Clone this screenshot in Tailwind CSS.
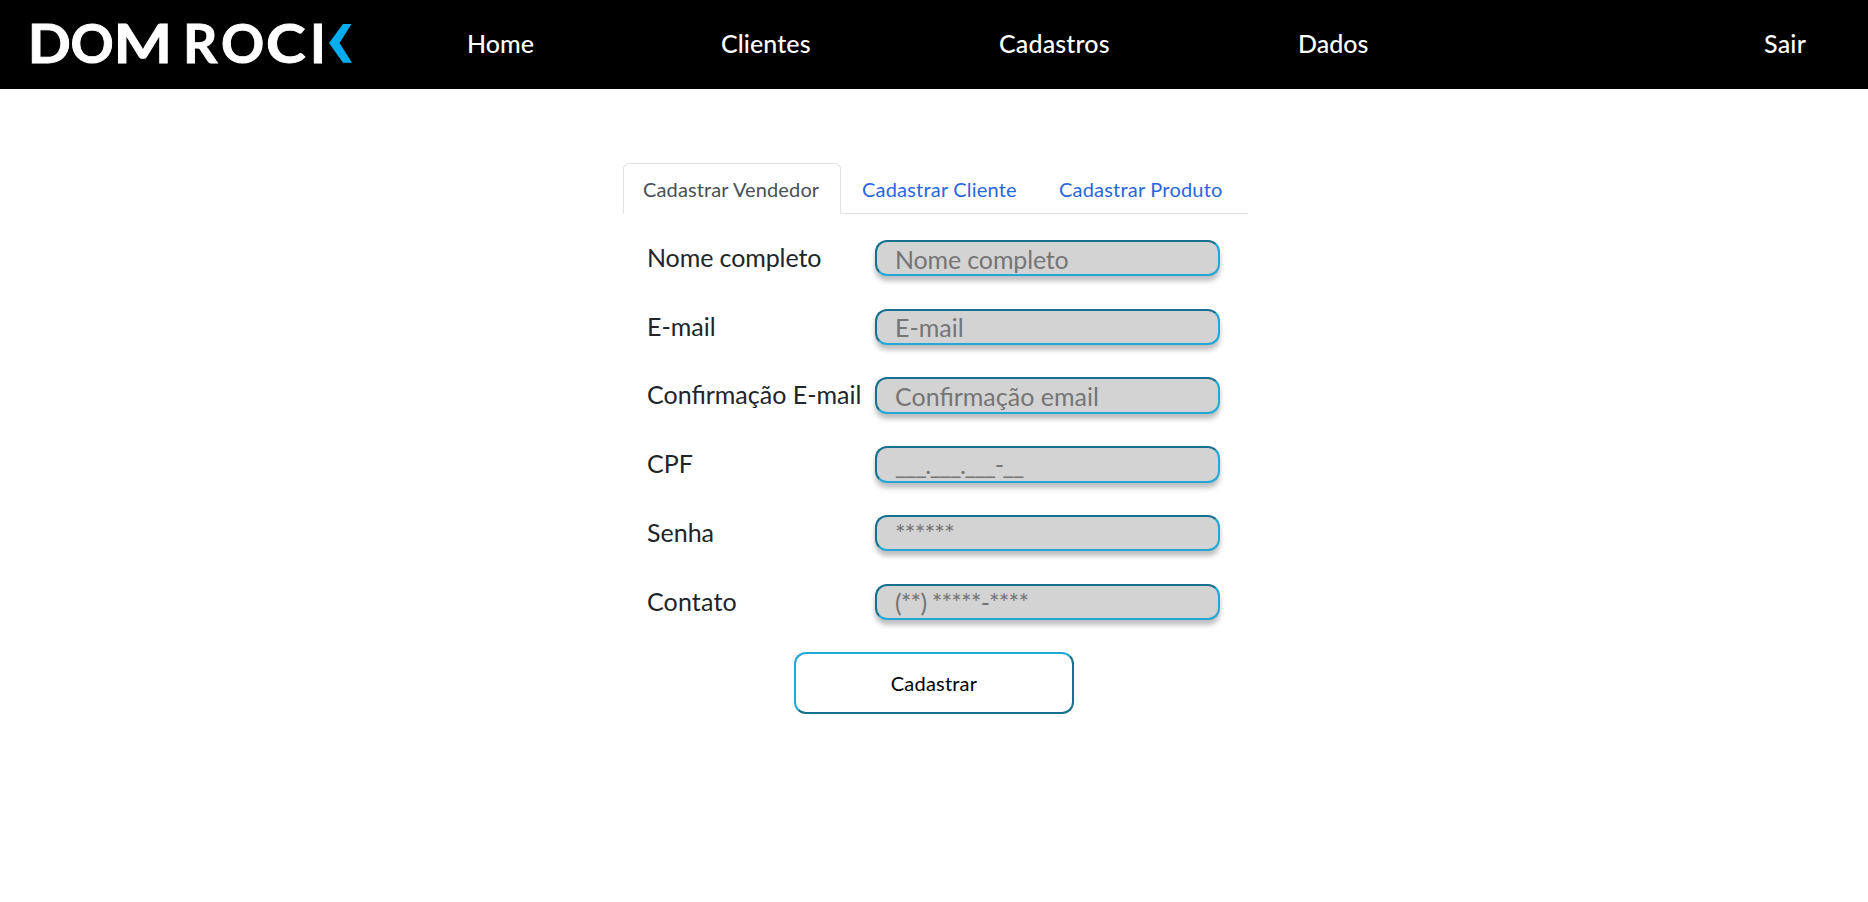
<!DOCTYPE html>
<html lang="pt-BR">
<head>
<meta charset="utf-8">
<title>Dom Rock</title>
<script src="https://cdn.jsdelivr.net/npm/@tailwindcss/browser@4"></script>
</head>
<body class="h-screen overflow-hidden bg-white font-['Lato',sans-serif] text-[#212529]">
<header class="flex h-[89px] items-center bg-black text-[25px] leading-[38px] font-medium text-white">
  <svg class="h-[89px] w-[353px] shrink-0 overflow-visible" viewBox="0 0 353 89" fill="#fff" role="img">
    <g font-family="Lato, sans-serif" font-weight="700" font-size="53.500" stroke="#fff" stroke-width="0.900">
      <text transform="translate(27.800 62.500) scale(1.060 1)">D</text>
      <text transform="translate(70.500 62.500)">O</text>
      <text transform="translate(113.500 62.500) scale(1.160 1)">M</text>
      <text transform="translate(183 62.500)">R</text>
      <text transform="translate(221 62.500)">O</text>
      <text transform="translate(266 62.500) scale(1.120 1)">C</text>
      <text transform="translate(310 62.500)">I</text>
    </g>
    <path d="M343 24h8.500l-12 19 12.500 19.700h-9l-14-19.700z" fill="#00aeef"/>
  </svg>
  <nav class="flex grow items-center pb-[3px]">
    <a class="ml-[114px] w-[254px]">Home</a>
    <a class="w-[278px] tracking-[0.1px]">Clientes</a>
    <a class="w-[299px] tracking-[0.15px]">Cadastros</a>
    <a>Dados</a>
    <a class="mr-[62px] ml-auto tracking-[0.2px]">Sair</a>
  </nav>
</header>
<main class="ml-[623px] w-[625px] pt-[74px]">
  <div class="flex h-[51px] border-b border-[#dee2e6] text-[20px] leading-[30px]">
    <a class="h-[51px] w-[218px] shrink-0 rounded-t-[6px] border border-[#dee2e6] border-b-white bg-white pt-[10px] pl-[19px] tracking-[0.13px] text-[#495057]">Cadastrar Vendedor</a>
    <a class="w-[197px] pt-[11px] pl-[21px] tracking-[0.2px] text-[#2a66dd]">Cadastrar Cliente</a>
    <a class="pt-[11px] pl-[21px] tracking-[0.2px] text-[#2a66dd]">Cadastrar Produto</a>
  </div>
  <form class="flex flex-col pt-[26px] pl-[24px] text-[25px] leading-[38px]">
    <div class="flex h-[69px] items-start"><label class="-mt-[2px] w-[228px] shrink-0 tracking-[-0.1px]">Nome completo</label><input placeholder="Nome completo" class="h-[36px] w-[345px] rounded-[12px] border-2 border-[#22a7d6] border-t-[#16708f] border-l-[#16708f] bg-[#d3d3d3] px-[18px] pt-[2px] tracking-[-0.15px] shadow-[0_5px_5px_rgba(0,0,0,0.25)] placeholder:text-[#757575]"></div>
    <div class="flex h-[68px] items-start"><label class="-mt-[2px] w-[228px] shrink-0">E-mail</label><input placeholder="E-mail" class="h-[36px] w-[345px] rounded-[12px] border-2 border-[#22a7d6] border-t-[#16708f] border-l-[#16708f] bg-[#d3d3d3] px-[18px] shadow-[0_5px_5px_rgba(0,0,0,0.25)] placeholder:text-[#757575]"></div>
    <div class="flex h-[69px] items-start"><label class="-mt-[2px] w-[228px] shrink-0">Confirmação E-mail</label><input placeholder="Confirmação email" class="h-[37px] w-[345px] rounded-[12px] border-2 border-[#22a7d6] border-t-[#16708f] border-l-[#16708f] bg-[#d3d3d3] px-[18px] shadow-[0_5px_5px_rgba(0,0,0,0.25)] placeholder:text-[#757575]"></div>
    <div class="flex h-[69px] items-start"><label class="-mt-[2px] w-[228px] shrink-0">CPF</label><input placeholder="___.___.___-__" class="h-[37px] w-[345px] rounded-[12px] border-2 border-[#22a7d6] border-t-[#16708f] border-l-[#16708f] bg-[#d3d3d3] px-[18px] pb-[2px] tracking-[-1.4px] shadow-[0_5px_5px_rgba(0,0,0,0.25)] placeholder:text-[#757575]"></div>
    <div class="flex h-[69px] items-start"><label class="-mt-[2px] w-[228px] shrink-0">Senha</label><input placeholder="******" class="h-[36px] w-[345px] rounded-[12px] border-2 border-[#22a7d6] border-t-[#16708f] border-l-[#16708f] bg-[#d3d3d3] px-[18px] tracking-[-0.8px] shadow-[0_5px_5px_rgba(0,0,0,0.25)] placeholder:text-[#757575]"></div>
    <div class="flex h-[68px] items-start"><label class="-mt-[2px] w-[228px] shrink-0 tracking-[0.15px]">Contato</label><input placeholder="(**) *****-****" class="h-[36px] w-[345px] rounded-[12px] border-2 border-[#22a7d6] border-t-[#16708f] border-l-[#16708f] bg-[#d3d3d3] px-[18px] tracking-[-0.85px] shadow-[0_5px_5px_rgba(0,0,0,0.25)] placeholder:text-[#757575]"></div>
    <button type="button" class="ml-[147px] h-[62px] w-[280px] rounded-[12px] border-2 border-[#16708f] border-t-[#22a7d6] border-l-[#22a7d6] bg-white pb-px text-[20px] leading-[30px] tracking-[0.2px] text-black">Cadastrar</button>
  </form>
</main>
</body>
</html>
